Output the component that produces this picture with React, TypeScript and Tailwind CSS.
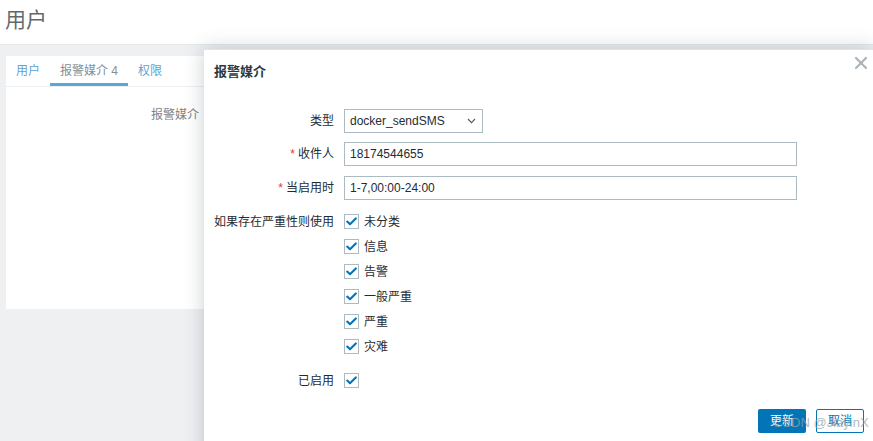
import { X } from 'lucide-react'

const font = "font-['Liberation_Sans','Noto_Sans_CJK_SC',sans-serif]"

const severities = ['未分类', '信息', '告警', '一般严重', '严重', '灾难']

function Check() {
  return (
    <span className="flex h-[15px] w-[15px] shrink-0 items-center justify-center border border-[#acbbc2] bg-white">
      <svg width="11" height="9" viewBox="0 0 11 9" fill="none">
        <path d="M1.2 4.6 L4 7.2 L9.8 1.4" stroke="#0275b8" strokeWidth="2.1" strokeLinecap="round" strokeLinejoin="round" />
      </svg>
    </span>
  )
}

function Label({ children, required }: { children: React.ReactNode; required?: boolean }) {
  return (
    <div className="w-[120px] shrink-0 text-right text-[12px] text-[#1f2c33]">
      {required && <span className="mr-[3px] text-[#e33734]">*</span>}
      {children}
    </div>
  )
}

export default function App() {
  return (
    <div className={`relative flex h-[441px] w-[873px] flex-col overflow-hidden bg-[#eef0f2] ${font}`}>
      {/* Page header */}
      <div className="h-[45px] shrink-0 border-b border-[#e4e8ea] bg-white pl-[5px] pt-[7px]">
        <h1 className="text-[21px] leading-[26px] text-[#62696e]">用户</h1>
      </div>

      {/* Background card */}
      <div className="mx-[6px] mt-[11px] h-[253px] bg-white">
        <div className="flex h-[31px] border-b border-[#eceff1] text-[12px]">
          <span className="flex items-center px-[10px] text-[#5fa3d0]">用户</span>
          <span className="relative flex items-center px-[10px] text-[#868e93]">
            报警媒介 4
            <span className="absolute bottom-0 left-0 right-0 h-[3px] bg-[#5aa6d4]" />
          </span>
          <span className="flex items-center px-[10px] text-[#5fa3d0]">权限</span>
        </div>
        <div className="mt-[19px] flex">
          <div className="w-[193px] text-right text-[12px] text-[#7b8388]">报警媒介</div>
        </div>
      </div>

      {/* Dialog */}
      <div className="absolute bottom-[-20px] left-[204px] right-0 top-[49px] border-t border-[#dfe4e7] bg-white shadow-[0_0_18px_rgba(40,60,70,0.25)]">
        <div className="relative flex h-[44px] items-center pl-[10px]">
          <h4 className="text-[13px] font-bold text-[#2b3a42]">报警媒介</h4>
          <X className="absolute right-[2px] top-[3px] h-[20px] w-[20px] text-[#a9b5bb]" strokeWidth={2.6} />
        </div>

        <div className="flex flex-col pl-[10px] pt-[15px]">
          <div className="flex items-center gap-[10px]">
            <Label>类型</Label>
            <div className="flex h-[24px] w-[139px] items-center justify-between border border-[#acbbc2] pl-[5px] pr-[6px] text-[12px] text-[#1f2c33]">
              <span>docker_sendSMS</span>
              <svg width="9" height="6" viewBox="0 0 9 6" fill="none">
                <path d="M1 1 L4.5 4.6 L8 1" stroke="#4f5b62" strokeWidth="1.1" />
              </svg>
            </div>
          </div>

          <div className="mt-[9px] flex items-center gap-[10px]">
            <Label required>收件人</Label>
            <div className="flex h-[24px] w-[453px] items-center border border-[#acbbc2] pl-[5px] text-[12px] text-[#1f2c33]">
              18174544655
            </div>
          </div>

          <div className="mt-[10px] flex items-center gap-[10px]">
            <Label required>当启用时</Label>
            <div className="flex h-[24px] w-[453px] items-center border border-[#acbbc2] pl-[5px] text-[12px] text-[#1f2c33]">
              1-7,00:00-24:00
            </div>
          </div>

          <div className="mt-[9px] flex gap-[10px]">
            <div className="flex h-[25px] items-center">
              <Label>如果存在严重性则使用</Label>
            </div>
            <div className="flex flex-col">
              {severities.map((s) => (
                <div key={s} className="flex h-[25px] items-center gap-[5px] text-[12px] text-[#1f2c33]">
                  <Check />
                  <span>{s}</span>
                </div>
              ))}
            </div>
          </div>

          <div className="mt-[9px] flex h-[25px] items-center gap-[10px]">
            <Label>已启用</Label>
            <Check />
          </div>
        </div>

        <div className="mt-[16px] flex justify-end gap-[10px] pr-[9px]">
          <button className="h-[24px] w-[48px] rounded-[2px] bg-[#0275b8] text-[12px] text-white">更新</button>
          <button className="h-[24px] w-[48px] rounded-[2px] border border-[#0275b8] bg-white text-[12px] text-[#0275b8]">取消</button>
        </div>
      </div>

      {/* Watermark */}
      <span className="pointer-events-none absolute left-[773px] top-[413px] text-[13px] text-[rgba(150,160,165,0.75)]">
        CSDN @JiayinX
      </span>
    </div>
  )
}
